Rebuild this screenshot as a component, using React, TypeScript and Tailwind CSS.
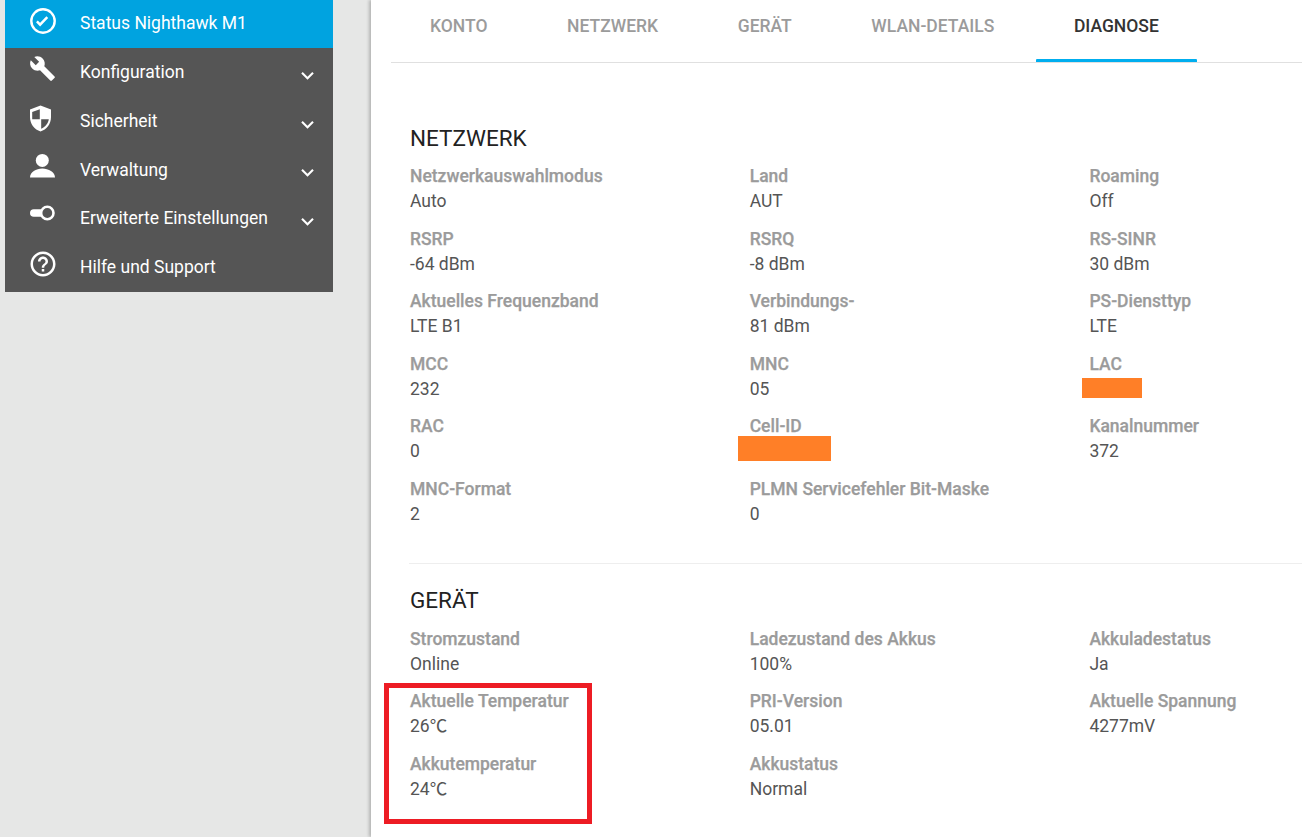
import type { ReactNode } from "react";
import { MdBuild, MdHelpOutline, MdKeyboardArrowDown } from "react-icons/md";

const tabs = ["KONTO", "NETZWERK", "GERÄT", "WLAN-DETAILS", "DIAGNOSE"];

const networkRows = [
  [["Netzwerkauswahlmodus", "Auto"], ["Land", "AUT"], ["Roaming", "Off"]],
  [["RSRP", "-64 dBm"], ["RSRQ", "-8 dBm"], ["RS-SINR", "30 dBm"]],
  [["Aktuelles Frequenzband", "LTE B1"], ["Verbindungs-", "81 dBm"], ["PS-Diensttyp", "LTE"]],
  [["MCC", "232"], ["MNC", "05"], ["LAC", ""]],
  [["RAC", "0"], ["Cell-ID", ""], ["Kanalnummer", "372"]],
  [["MNC-Format", "2"], ["PLMN Servicefehler Bit-Maske", "0"], ["", ""]],
];

const deviceRows = [
  [["Stromzustand", "Online"], ["Ladezustand des Akkus", "100%"], ["Akkuladestatus", "Ja"]],
  [["Aktuelle Temperatur", "26℃"], ["PRI-Version", "05.01"], ["Aktuelle Spannung", "4277mV"]],
  [["Akkutemperatur", "24℃"], ["Akkustatus", "Normal"], ["", ""]],
];

function CheckIcon() {
  return (
    <svg viewBox="0 0 30 30" className="h-[30px] w-[30px]" fill="none" stroke="#fff">
      <circle cx="14" cy="14" r="11.7" strokeWidth="2.4" />
      <path d="M7.9 14.4l3.2 3.2 7.2-7.5" strokeWidth="2.5" />
    </svg>
  );
}

function ShieldIcon() {
  return (
    <svg viewBox="0 0 30 30" className="h-[30px] w-[30px]">
      <path d="M11.5 1.5L22 5.5V13C22 20 17.5 25.5 11.5 27.5C5.5 25.5 1 20 1 13V5.5Z" fill="#fff" />
      <path d="M10.8 5.2L3.2 8.1V15.3H10.8Z" fill="#555" />
      <path d="M12.2 15.3H19.8C19.2 19.4 16.4 22.9 12.2 24.7Z" fill="#555" />
    </svg>
  );
}

function PersonIcon() {
  return (
    <svg viewBox="0 0 30 30" className="h-[30px] w-[30px]" fill="#fff">
      <circle cx="13.3" cy="7.4" r="6.5" />
      <path d="M1 24.5C1 19 7 15.5 13.3 15.5C19.5 15.5 26 19 26 24.5Z" />
    </svg>
  );
}

function ToggleIcon() {
  return (
    <svg viewBox="0 0 30 30" className="h-[30px] w-[30px]">
      <path d="M4.8 8.2H14V15.8H4.8A3.8 3.8 0 0 1 4.8 8.2Z" fill="#fff" />
      <circle cx="18.3" cy="12" r="6.2" stroke="#fff" strokeWidth="2.6" fill="#555" />
    </svg>
  );
}

function NavItem({ icon, label, active, arrow }: { icon: ReactNode; label: string; active?: boolean; arrow?: boolean }) {
  return (
    <div className={`flex items-center pl-[24px] pr-[13px] text-white ${active ? "h-[48px] bg-[#00a3e0]" : "h-[48.7px]"}`}>
      <div className="flex w-[51px] -translate-y-[2px] items-center">{icon}</div>
      <span className={`flex-1 whitespace-nowrap text-[17.5px] ${active ? "-translate-y-[1px]" : ""}`}>{label}</span>
      {arrow && <MdKeyboardArrowDown className="h-[25px] w-[25px] translate-y-[3px]" />}
    </div>
  );
}

function DataGrid({ rows }: { rows: string[][][] }) {
  return (
    <div>
      {rows.map((row, i) => (
        <div key={i} className="flex h-[62.6px]">
          {row.map(([label, value], j) => (
            <div key={j} className="w-[339.7px] shrink-0 leading-[25px]">
              <div className="h-[25px] whitespace-nowrap text-[17.5px] font-medium text-[#9b9b9b] [-webkit-text-stroke:0.25px_#9b9b9b]">
                {label}
              </div>
              <div className="h-[25px] text-[17.5px] text-[#555]">{value}</div>
            </div>
          ))}
        </div>
      ))}
    </div>
  );
}

export default function App() {
  return (
    <div className="relative flex h-[837px] w-[1302px] overflow-hidden bg-[#e6e7e6] font-['Roboto','Noto_Sans_CJK_SC',sans-serif]">
      <aside className="ml-[5px] h-[292px] w-[328px] shrink-0 overflow-hidden bg-[#555]">
        <NavItem active label="Status Nighthawk M1" icon={<CheckIcon />} />
        <NavItem arrow label="Konfiguration" icon={<MdBuild className="-mt-[3px] h-[27px] w-[27px]" />} />
        <NavItem arrow label="Sicherheit" icon={<ShieldIcon />} />
        <NavItem arrow label="Verwaltung" icon={<PersonIcon />} />
        <NavItem arrow label="Erweiterte Einstellungen" icon={<ToggleIcon />} />
        <NavItem label="Hilfe und Support" icon={<MdHelpOutline className="-mt-[3px] -ml-[1.5px] h-[30px] w-[30px]" />} />
      </aside>

      <main className="ml-[38px] min-w-0 flex-1 bg-white pl-[20px] shadow-[-2px_0_3px_rgba(0,0,0,0.22)]">
        <nav className="h-[63px] border-b border-[#e0e0e0]">
          <div className="-ml-[0.8px] flex">
            {tabs.map((tab) => (
              <div
                key={tab}
                className={`relative flex h-[62px] items-center px-[39.8px] pb-[10px] text-[17.5px] font-medium ${
                  tab === "DIAGNOSE" ? "text-[#333]" : "text-[#9b9b9b]"
                }`}
              >
                {tab}
                {tab === "DIAGNOSE" && (
                  <span className="absolute bottom-0 left-[1.8px] h-[3px] w-[161.5px] rounded-t-[1px] bg-[#00aeef]" />
                )}
              </div>
            ))}
          </div>
        </nav>

        <section className="ml-[19px] pt-[60px]">
          <h2 className="h-[41px] text-[22.5px] leading-[30px] font-normal text-[#222]">NETZWERK</h2>
          <DataGrid rows={networkRows} />
          <div className="mt-[23px] mb-[21px] -ml-px h-px bg-[#eeeeee]" />
          <h2 className="h-[42px] text-[22.5px] leading-[30px] font-normal text-[#222]">GERÄT</h2>
          <DataGrid rows={deviceRows} />
        </section>
      </main>

      <div className="absolute top-[378px] left-[1082px] h-[20px] w-[60px] bg-[#ff7f27]" />
      <div className="absolute top-[436px] left-[738px] h-[25px] w-[93px] bg-[#ff7f27]" />
      <div className="absolute top-[683px] left-[384px] h-[141px] w-[208px] border-[5px] border-[#ed1c24]" />
    </div>
  );
}
